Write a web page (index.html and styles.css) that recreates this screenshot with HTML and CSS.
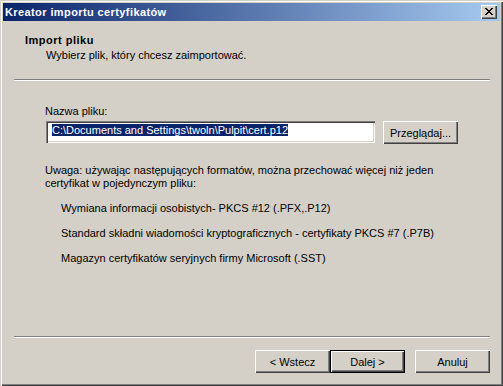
FILE: index.html
```html
<!DOCTYPE html>
<html lang="pl">
<head>
  <meta charset="UTF-8">
  <title>Kreator importu certyfikatów</title>
  <link rel="stylesheet" href="styles.css">
</head>
<body>
  <div class="window">
    <div class="titlebar">
      <span class="title">Kreator importu certyfikatów</span>
      <button class="close-btn" aria-label="Zamknij">
        <svg width="8" height="7" viewBox="0 0 8 7">
          <path d="M0 0h2v1H0zM6 0h2v1H6zM1 1h2v1H1zM5 1h2v1H5zM2 2h4v1H2zM3 3h2v1H3zM2 4h4v1H2zM1 5h2v1H1zM5 5h2v1H5zM0 6h2v1H0zM6 6h2v1H6z" fill="#000"/>
        </svg>
      </button>
    </div>

    <div class="header">
      <div class="header-title">Import pliku</div>
      <div class="header-sub">Wybierz plik, który chcesz zaimportować.</div>
    </div>
    <div class="rule rule-top"></div>

    <div class="content">
      <label class="field-label" for="file">Nazwa pliku:</label>
      <div class="file-row">
        <div class="textbox" id="file"><span class="selected">C:\Documents and Settings\twoln\Pulpit\cert.p12</span></div>
        <button class="btn">Przeglądaj...</button>
      </div>

      <p class="note">Uwaga: używając następujących formatów, można przechować więcej niż jeden certyfikat w pojedynczym pliku:</p>
      <ul class="formats">
        <li>Wymiana informacji osobistych- PKCS #12 (.PFX,.P12)</li>
        <li>Standard składni wiadomości kryptograficznych - certyfikaty PKCS #7 (.P7B)</li>
        <li>Magazyn certyfikatów seryjnych firmy Microsoft (.SST)</li>
      </ul>
    </div>

    <div class="footer">
      <div class="rule rule-bottom"></div>
      <div class="buttons">
        <button class="btn">&lt; Wstecz</button>
        <button class="btn btn-default">Dalej &gt;</button>
        <button class="btn btn-cancel">Anuluj</button>
      </div>
    </div>
  </div>
</body>
</html>
```

FILE: styles.css
```css
html, body {
  margin: 0;
  padding: 0;
  background: #d4d0c8;
}
body {
  font-family: "Liberation Sans", Arial, sans-serif;
  font-size: 11px;
  line-height: 13px;
  color: #000;
}
.window {
  width: 503px;
  height: 386px;
  box-sizing: border-box;
  padding: 3px;
  background: #d4d0c8;
  box-shadow: inset 1px 1px 0 #d4d0c8, inset 2px 2px 0 #fff,
              inset -1px -1px 0 #404040, inset -2px -2px 0 #808080;
  display: flex;
  flex-direction: column;
}
.titlebar {
  height: 18px;
  display: flex;
  align-items: center;
  justify-content: space-between;
  padding: 0 3px 0 2px;
  background: linear-gradient(to right, #0a246a, #a6caf0);
}
.title {
  color: #fff;
  font-weight: bold;
  font-size: 11px;
  letter-spacing: 0.4px;
}
.close-btn {
  width: 16px;
  height: 14px;
  padding: 0;
  margin: 0;
  border: none;
  background: #d4d0c8;
  box-shadow: inset 1px 1px 0 #fff, inset -1px -1px 0 #404040, inset -2px -2px 0 #808080;
  display: flex;
  align-items: center;
  justify-content: center;
}
.close-btn svg {
  display: block;
  margin: 0 1px 1px 0;
}

.header {
  padding: 13px 0 0 22px;
}
.header-title {
  font-weight: bold;
  letter-spacing: 0.5px;
}
.header-sub {
  margin-top: 2px;
  padding-left: 21px;
}
.rule {
  height: 0;
  border-top: 1px solid #808080;
  border-bottom: 1px solid #fff;
  margin-left: 11px;
  width: 476px;
}
.rule-top {
  margin-top: 17px;
}

.content {
  padding-left: 42px;
}
.field-label {
  display: block;
  margin-top: 24px;
}
.file-row {
  display: flex;
  gap: 8px;
  margin-top: 3px;
  margin-left: 1px;
}
.textbox {
  width: 329px;
  height: 22px;
  box-sizing: border-box;
  background: #fff;
  padding: 3px 0 0 6px;
  box-shadow: inset 1px 1px 0 #808080, inset 2px 2px 0 #404040,
              inset -1px -1px 0 #fff, inset -2px -2px 0 #d4d0c8;
  white-space: nowrap;
  overflow: hidden;
}
.selected {
  background: #0a246a;
  color: #fff;
}
.btn {
  width: 75px;
  height: 23px;
  padding: 0;
  margin: 0;
  border: none;
  background: #d4d0c8;
  font-family: inherit;
  font-size: 11px;
  color: #000;
  box-shadow: inset 1px 1px 0 #fff, inset -1px -1px 0 #404040, inset -2px -2px 0 #808080;
}
.btn-default {
  box-shadow: inset 0 0 0 1px #000, inset 2px 2px 0 #fff,
              inset -2px -2px 0 #404040, inset -3px -3px 0 #808080;
}

.note {
  margin: 20px 0 0 0;
  width: 400px;
}
.formats {
  list-style: none;
  margin: 0;
  padding: 0 0 0 16px;
}
.formats li {
  margin-top: 12px;
}

.footer {
  margin-top: auto;
  padding-bottom: 10px;
}
.buttons {
  display: flex;
  justify-content: flex-end;
  margin-top: 12px;
  padding-right: 10px;
}
.btn-cancel {
  margin-left: 10px;
}
```
